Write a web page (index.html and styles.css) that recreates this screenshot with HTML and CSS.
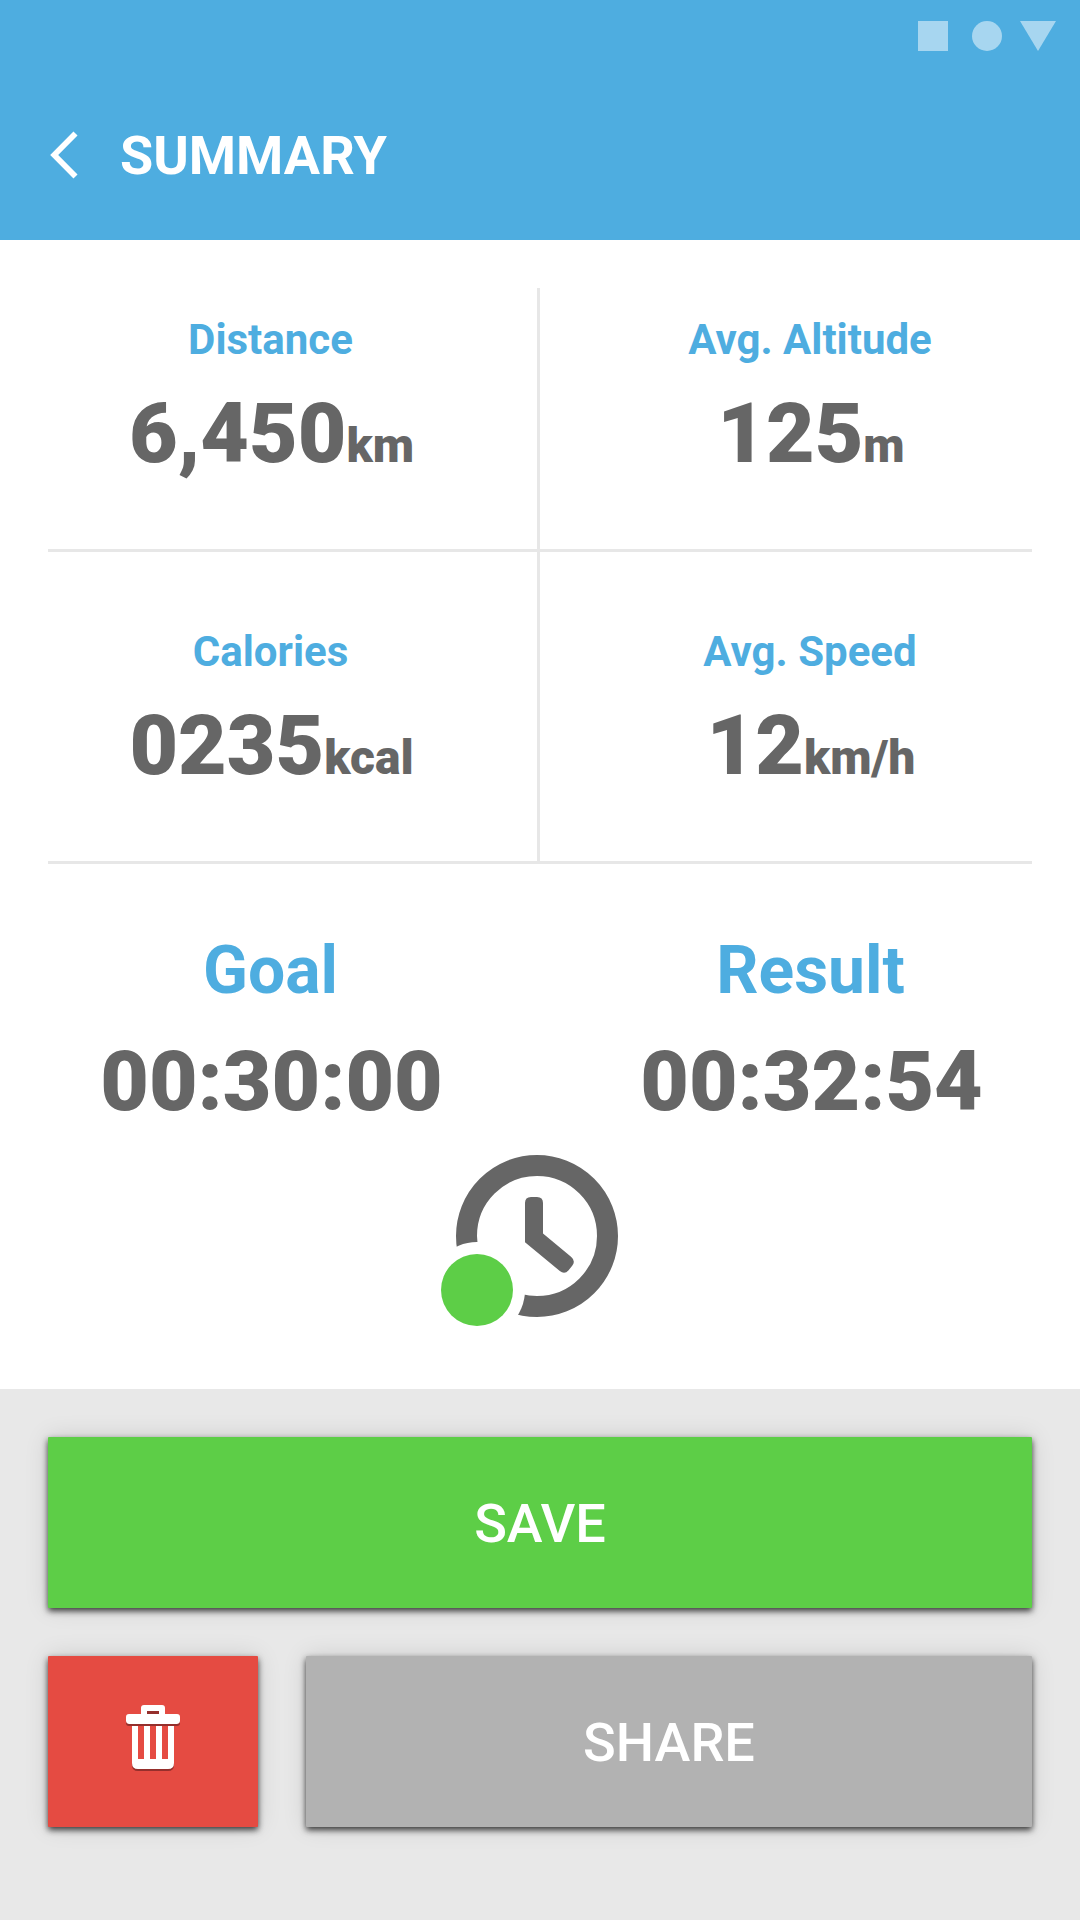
FILE: index.html
```
<!DOCTYPE html>
<html lang="en">
<head>
    <meta charset="UTF-8">
    <meta name="viewport" content="width=device-width, initial-scale=1.0">
    <title>Summary</title>
    <link rel="stylesheet" href="styles.css">
</head>
<body>
    <header class="app-header">
        <div class="status-bar">
            <svg width="138" height="30" viewBox="0 0 138 30">
                <rect width="30" height="30"/>
                <circle cx="69" cy="15" r="15"/>
                <path d="M102 0h36l-18 30z"/>
            </svg>
        </div>
        <div class="title-bar">
            <a class="back" href="#" aria-label="Back">
                <svg width="28" height="48" viewBox="0 0 28 48">
                    <path d="M25.5 2.5L4.2 24l21.3 21.5" fill="none" stroke="#fff" stroke-width="5.7"/>
                </svg>
            </a>
            <h1>SUMMARY</h1>
        </div>
    </header>

    <main>
        <div class="stats-row">
            <div class="stat">
                <h2>Distance</h2>
                <p class="value">6,450<span class="unit">km</span></p>
            </div>
            <div class="stat">
                <h2>Avg. Altitude</h2>
                <p class="value">125<span class="unit">m</span></p>
            </div>
        </div>
        <div class="stats-row second">
            <div class="stat">
                <h2>Calories</h2>
                <p class="value">0235<span class="unit">kcal</span></p>
            </div>
            <div class="stat">
                <h2>Avg. Speed</h2>
                <p class="value">12<span class="unit">km/h</span></p>
            </div>
        </div>

        <div class="times">
            <div class="time">
                <h2>Goal</h2>
                <p class="value">00:30:00</p>
            </div>
            <div class="time">
                <h2>Result</h2>
                <p class="value">00:32:54</p>
            </div>
        </div>

        <div class="clock">
            <svg width="177" height="171" viewBox="0 0 177 171">
                <circle cx="96" cy="81" r="70.5" fill="none" stroke="#666" stroke-width="21"/>
                <path d="M84 48q0-6 6-6h6q6 0 6 6v30.5l28 23.3q5 4.2 1.2 9l-3.6 4.4q-4 4.6-8.8.8L84 87.3z" fill="#666"/>
                <circle cx="36" cy="135" r="48" fill="#fff"/>
                <circle cx="36" cy="135" r="36" fill="#5dce47"/>
            </svg>
        </div>
    </main>

    <footer class="actions">
        <button class="btn save">SAVE</button>
        <div class="actions-row">
            <button class="btn delete" aria-label="Delete">
                <svg width="54" height="67" viewBox="0 0 54 67">
                    <defs>
                        <path id="trash" fill-rule="evenodd" d="M15 9V3q0-3 3-3h18q3 0 3 3v6h12q3 0 3 3v4q0 3-3 3H3q-3 0-3-3v-4q0-3 3-3zM21 6v3h12V6zM6 19h42v39q0 6-6 6H12q-6 0-6-6zM12 21v33h6V21zM24 21v33h6V21zM36 21v33h6V21z"/>
                    </defs>
                    <path d="M6 57h42v3q0 6-6 6H12q-6 0-6-6zM21 6h12v3H21z" fill="#952f2c"/>
                    <use href="#trash" fill="#fff"/>
                    <path d="M0 16q0 3 3 3h48q3 0 3-3v2q0 3-3 3H3q-3 0-3-3z" fill="#952f2c"/>
                </svg>
            </button>
            <button class="btn share">SHARE</button>
        </div>
    </footer>
</body>
</html>
```
FILE: styles.css
```
* {
    box-sizing: border-box;
}
body {
    font-family: Roboto, sans-serif;
    margin: 0;
    min-height: 1920px;
    display: flex;
    flex-direction: column;
    background: #fff;
    color: #666;
}
h1, h2, p {
    margin: 0;
}
svg {
    display: block;
}
.app-header {
    height: 240px;
    background: #4eade0;
    color: #fff;
}
.status-bar {
    display: flex;
    justify-content: flex-end;
    padding: 21px 24px;
    height: 72px;
    fill: rgba(255, 255, 255, 0.5);
}
.title-bar {
    display: flex;
    align-items: center;
    height: 165px;
    padding-left: 50px;
}
.back {
    width: 70px;
}
h1 {
    padding-top: 2px;
    font-size: 54px;
    font-weight: 700;
    line-height: 64px;
}
main {
    height: 1149px;
    padding-top: 48px;
}
.stats-row {
    display: flex;
    height: 264px;
    margin: 0 48px;
    border-bottom: 3px solid #e7e7e7;
}
.stats-row.second {
    height: 312px;
}
.stat {
    width: 492px;
    padding: 28px 0 0 48px;
    text-align: center;
}
.second .stat {
    padding-top: 76px;
}
.stat:first-child {
    padding-left: 0;
    padding-right: 44px;
    border-right: 3px solid #e7e7e7;
}
h2 {
    color: #4eade0;
    font-size: 42px;
    font-weight: 700;
    line-height: 48px;
}
.value {
    margin-top: 22px;
    padding-left: 2px;
    font-size: 84px;
    font-weight: 900;
    line-height: 96px;
}
.unit {
    font-size: 48px;
    line-height: 1;
}
.times {
    display: flex;
    padding-top: 71px;
}
.time {
    width: 540px;
    padding-left: 1px;
    text-align: center;
}
.time h2 {
    font-size: 66px;
    line-height: 72px;
}
.time .value {
    margin-top: 27px;
}
.clock {
    display: flex;
    justify-content: center;
    padding: 25px 21px 0 0;
}
.actions {
    flex: 1;
    display: flex;
    flex-direction: column;
    gap: 48px;
    padding: 48px;
    background: #e8e8e8;
}
.actions-row {
    display: flex;
    gap: 48px;
}
.btn {
    display: flex;
    align-items: center;
    justify-content: center;
    height: 171px;
    padding: 2px 0 0;
    border: none;
    border-radius: 1px;
    color: #fff;
    font-family: inherit;
    font-size: 54px;
    font-weight: 500;
    box-shadow: 0 0 24px rgba(0, 0, 0, 0.12), 0 3px 6px rgba(0, 0, 0, 0.75);
}
.save {
    background: #5dce47;
}
.delete {
    width: 210px;
    padding: 0 0 6px;
    background: #e54b42;
}
.share {
    flex: 1;
    background: #b2b2b2;
}
```
